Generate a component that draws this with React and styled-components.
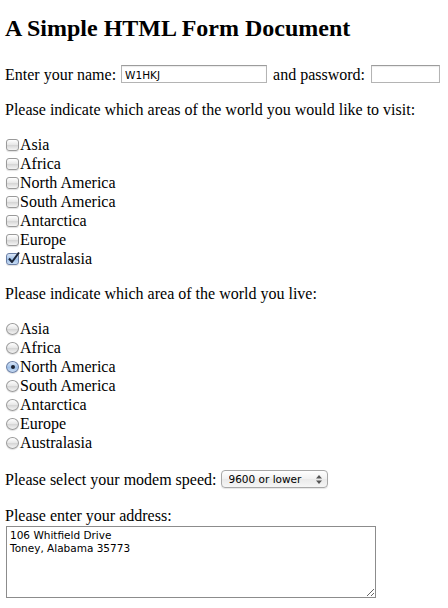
import styled, { createGlobalStyle } from "styled-components";

const GlobalStyle = createGlobalStyle`
  body {
    margin: 0;
    background: #fff;
    color: #000;
    font-family: "Liberation Serif", "Times New Roman", serif;
    font-size: 16px;
  }
`;

const Page = styled.form`
  padding: 0 5px;
  display: flex;
  flex-direction: column;
`;

const Title = styled.h2`
  font-size: 24px;
  font-weight: bold;
  line-height: 28px;
  margin: 14px 0 22px;
  white-space: nowrap;
`;

const Line = styled.div`
  display: flex;
  align-items: center;
  white-space: nowrap;
  line-height: 19px;
  height: ${(p) => p.$h || 19}px;
  margin-bottom: ${(p) => (p.$gap === undefined ? 16 : p.$gap)}px;
`;

const TextBox = styled.input`
  box-sizing: border-box;
  flex: none;
  width: ${(p) => p.$w}px;
  height: 18px;
  margin: 0 ${(p) => p.$mr || 0}px 0 ${(p) => p.$ml || 0}px;
  padding: 1px 3px 0;
  border: 1px solid #b4b4b4;
  border-top-color: #9c9c9c;
  box-shadow: inset 0 1px 1px rgba(0, 0, 0, 0.08);
  font-family: "DejaVu Sans", sans-serif;
  font-size: 10.5px;
  color: #000;
  outline: none;
`;

const List = styled.div`
  display: flex;
  flex-direction: column;
  margin-bottom: 16px;
`;

const Option = styled.label`
  display: flex;
  align-items: center;
  height: 19px;
  line-height: 19px;
`;

const Box = styled.span`
  position: relative;
  box-sizing: border-box;
  width: 13px;
  height: 12px;
  margin: 1px 1px 0 1px;
  border: 1px solid ${(p) => (p.$on ? "#6a7fa6" : "#9a9a9a")};
  border-radius: ${(p) => (p.$round ? "50%" : "3px")};
  background: ${(p) =>
    p.$on
      ? "linear-gradient(#dbe7f7, #9fc0e8 55%, #c9dcf3)"
      : "linear-gradient(#ffffff, #e6e6e6 50%, #d4d4d4 51%, #f4f4f4)"};
  box-shadow: 0 1px 1px rgba(0, 0, 0, 0.12);
  flex: none;
`;

const Dot = styled.span`
  position: absolute;
  left: 3.5px;
  top: 3px;
  width: 4px;
  height: 4px;
  border-radius: 50%;
  background: #1c2230;
`;

const Tick = styled.svg`
  position: absolute;
  left: 0;
  top: -3px;
  width: 13px;
  height: 13px;
`;

const SelectWrap = styled.span`
  position: relative;
  display: inline-flex;
  flex: none;
  margin-left: 4px;
`;

const Select = styled.select`
  appearance: none;
  box-sizing: border-box;
  width: 107px;
  height: 18px;
  padding: 0 0 0 7px;
  border: 1px solid #a8a8a8;
  border-radius: 4px;
  background: linear-gradient(#ffffff, #f1f1f1 50%, #e9e9e9 51%, #f6f6f6);
  box-shadow: 0 1px 1px rgba(0, 0, 0, 0.1);
  font-family: "DejaVu Sans", sans-serif;
  font-size: 10.5px;
  color: #000;
  outline: none;
`;

const Arrows = styled.svg`
  position: absolute;
  right: 6px;
  top: 5px;
  width: 6px;
  height: 9px;
  pointer-events: none;
`;

const Address = styled.textarea`
  box-sizing: border-box;
  width: 370px;
  height: 72px;
  margin: 0 0 0 1px;
  padding: 2px 3px;
  border: 1px solid #8c8c8c;
  font-family: "DejaVu Sans", sans-serif;
  font-size: 10.5px;
  line-height: 13px;
  color: #000;
  resize: both;
  outline: none;
`;

const visitAreas = ["Asia", "Africa", "North America", "South America", "Antarctica", "Europe", "Australasia"];

function Check({ on, round }) {
  return (
    <Box $on={on} $round={round}>
      {on && !round && (
        <Tick viewBox="0 0 13 13">
          <path d="M2 7.5 L5 11 L12 1.5" fill="none" stroke="#1b2436" strokeWidth="2" strokeLinejoin="round" />
        </Tick>
      )}
      {on && round && <Dot />}
    </Box>
  );
}

export default function App() {
  return (
    <>
      <GlobalStyle />
      <Page onSubmit={(e) => e.preventDefault()}>
        <Title>A Simple HTML Form Document</Title>

        <Line $h={20}>
          Enter your name:
          <TextBox $w={146} $ml={5} $mr={6} defaultValue="W1HKJ" />
          and password:
          <TextBox $w={69} $ml={6} type="password" />
        </Line>

        <Line>Please indicate which areas of the world you would like to visit:</Line>
        <List>
          {visitAreas.map((a) => (
            <Option key={a}>
              <Check on={a === "Australasia"} />
              {a}
            </Option>
          ))}
        </List>

        <Line>Please indicate which area of the world you live:</Line>
        <List>
          {visitAreas.map((a) => (
            <Option key={a}>
              <Check round on={a === "North America"} />
              {a}
            </Option>
          ))}
        </List>

        <Line $h={22}>
          Please select your modem speed:
          <SelectWrap>
            <Select defaultValue="9600">
              <option value="9600">9600 or lower</option>
              <option value="14400">14.4 Kbps</option>
              <option value="28800">28.8 Kbps</option>
              <option value="56000">56 Kbps</option>
            </Select>
            <Arrows viewBox="0 0 6 9">
              <path d="M0 3.5 L3 0 L6 3.5 Z M0 5.5 L3 9 L6 5.5 Z" fill="#555" />
            </Arrows>
          </SelectWrap>
        </Line>

        <Line $gap={1}>Please enter your address:</Line>
        <Address defaultValue={"106 Whitfield Drive\nToney, Alabama 35773"} />
      </Page>
    </>
  );
}
